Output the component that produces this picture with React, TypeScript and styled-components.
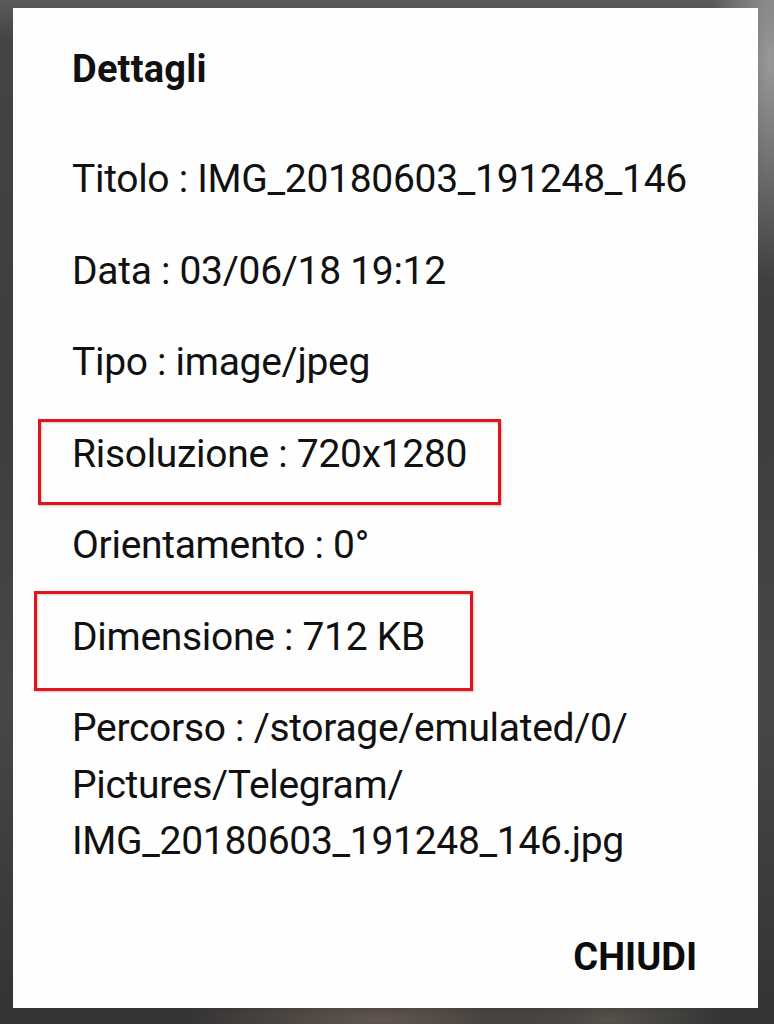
import React from "react";
import styled, { createGlobalStyle } from "styled-components";

const Global = createGlobalStyle`
  html, body {
    margin: 0;
    padding: 0;
    height: 100%;
  }
  body {
    width: 774px;
    height: 1024px;
    overflow: hidden;
    font-family: Roboto, "Noto Sans", Arial, sans-serif;
    background:
      radial-gradient(ellipse 60px 220px at 770px 60px, #9a9a9a 0%, rgba(150,150,150,0) 100%),
      radial-gradient(ellipse 200px 30px at 380px 1020px, rgba(110,95,85,0.8) 0%, rgba(90,80,70,0) 100%),
      radial-gradient(ellipse 120px 30px at 610px 1020px, rgba(100,95,85,0.7) 0%, rgba(90,80,70,0) 100%),
      linear-gradient(180deg, #5b5b5b 0px, #444 40px, #3d3d3d 400px, #474747 700px, #333 1024px);
  }
`;

const Backdrop = styled.div`
  box-sizing: border-box;
  width: 774px;
  height: 1024px;
  padding: 8px 16px 16px 13px;
  display: flex;
`;

const Dialog = styled.div`
  box-sizing: border-box;
  flex: 1;
  background: #fefefe;
  padding: 33px 40px 0 59px;
  display: flex;
  flex-direction: column;
  color: #111;
`;

const Title = styled.h2`
  margin: 0 0 54px;
  font-size: 38px;
  font-weight: 700;
  line-height: 56px;
  letter-spacing: 0.2px;
`;

const List = styled.div`
  display: flex;
  flex-direction: column;
  gap: 35px;
`;

const Row = styled.div`
  position: relative;
  font-size: 39px;
  font-weight: 400;
  line-height: 56.5px;
  letter-spacing: -0.3px;
`;

const Highlight = styled.span<{ $l: number; $t: number; $w: number; $h: number }>`
  position: absolute;
  left: ${(p) => p.$l}px;
  top: ${(p) => p.$t}px;
  width: ${(p) => p.$w}px;
  height: ${(p) => p.$h}px;
  box-sizing: border-box;
  border: 3.5px solid #e2141b;
  box-shadow: 1px 1px 2px rgba(0, 0, 0, 0.25), inset 1px 1px 2px rgba(0, 0, 0, 0.2);
  pointer-events: none;
`;

const Footer = styled.div`
  margin-top: auto;
  display: flex;
  justify-content: flex-end;
  padding: 0 21px 23px 0;
`;

const CloseButton = styled.button`
  background: none;
  border: none;
  padding: 0;
  font-family: Roboto, "Noto Sans", Arial, sans-serif;
  font-size: 38px;
  font-weight: 700;
  line-height: 56px;
  color: #0c0c0c;
  letter-spacing: 0px;
  cursor: pointer;
`;

type Item = {
  label: string;
  value: string;
  box?: { l: number; t: number; w: number; h: number };
};

const items: Item[] = [
  { label: "Titolo", value: "IMG_20180603_191248_146" },
  { label: "Data", value: "03/06/18 19:12" },
  { label: "Tipo", value: "image/jpeg" },
  { label: "Risoluzione", value: "720x1280", box: { l: -34, t: -7, w: 463, h: 86 } },
  { label: "Orientamento", value: "0°" },
  { label: "Dimensione", value: "712 KB", box: { l: -38, t: -18, w: 439, h: 100 } },
];

export default function App() {
  return (
    <>
      <Global />
      <Backdrop>
        <Dialog>
          <Title>Dettagli</Title>
          <List>
            {items.map((it) => (
              <Row key={it.label}>
                {it.label} : {it.value}
                {it.box && <Highlight $l={it.box.l} $t={it.box.t} $w={it.box.w} $h={it.box.h} />}
              </Row>
            ))}
            <Row>
              Percorso : /storage/emulated/0/
              <br />
              Pictures/Telegram/
              <br />
              IMG_20180603_191248_146.jpg
            </Row>
          </List>
          <Footer>
            <CloseButton>CHIUDI</CloseButton>
          </Footer>
        </Dialog>
      </Backdrop>
    </>
  );
}
